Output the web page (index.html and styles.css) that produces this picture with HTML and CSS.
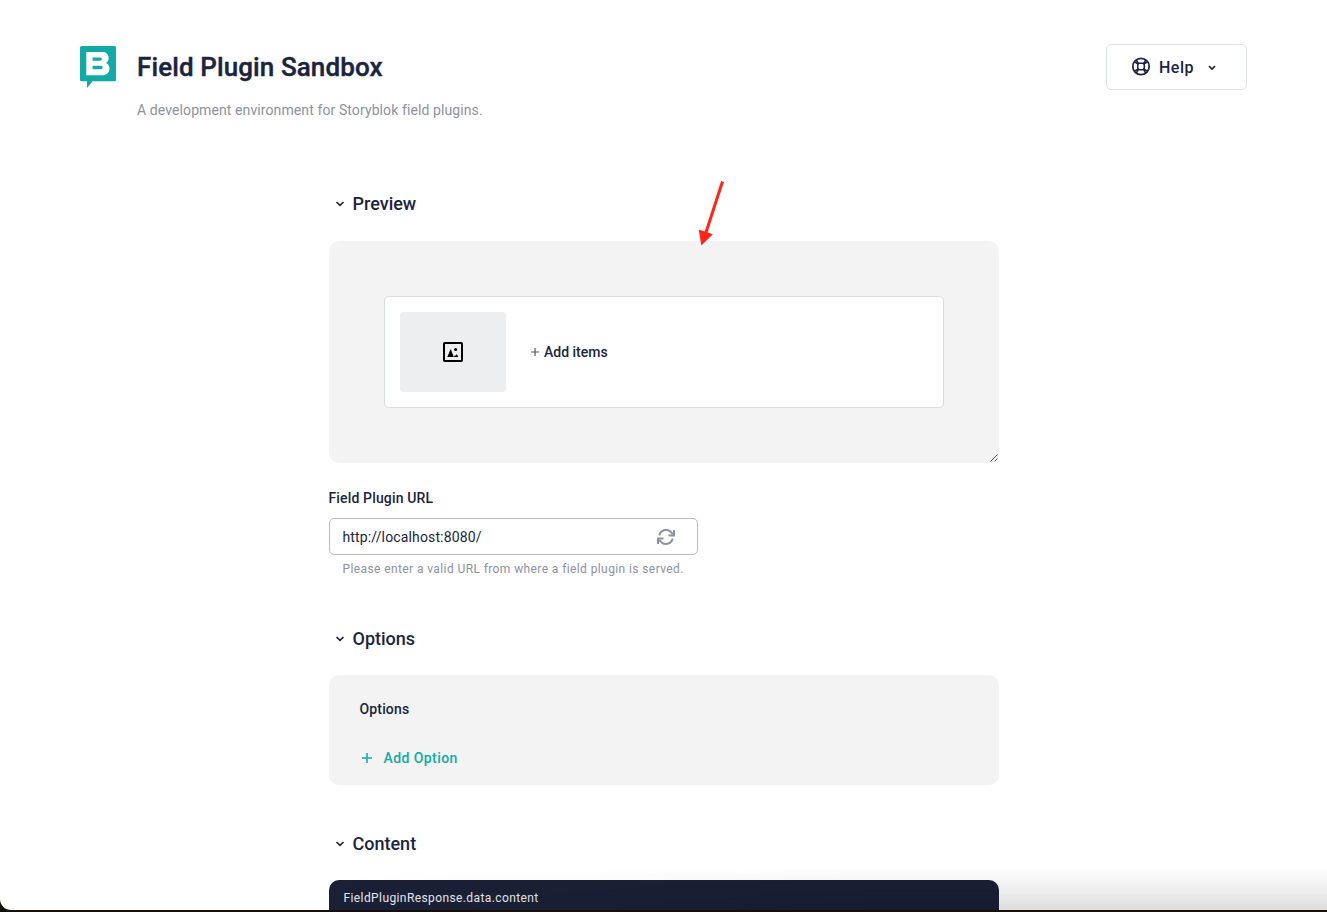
FILE: index.html
```html
<!DOCTYPE html>
<html lang="en">
<head>
<meta charset="utf-8">
<title>Field Plugin Sandbox</title>
<link rel="stylesheet" href="styles.css">
</head>
<body>
<div class="window">
  <header class="header">
    <svg class="logo" width="36" height="42" viewBox="0 0 36 42"><path fill="#11aaa8" d="M1.500 0h33A1.500 1.500 0 0 1 36 1.500v32.300a1.500 1.500 0 0 1-1.500 1.500H12.500L7 42v-6.700H1.500A1.500 1.500 0 0 1 0 33.800V1.500A1.500 1.500 0 0 1 1.500 0z"/><path fill="#fff" fill-rule="evenodd" d="M6.300 6h16.200c3.800 0 6.200 2.500 6.200 6 0 2.400-1 4-2.900 5 2.300.9 3.700 2.800 3.700 5.400 0 4.200-3 6.800-7.300 6.800H6.300zM12.600 11.600v3.200h7.700c2.100 0 2.100-3.200 0-3.200zm0 8.200v3.400h8.400c2.200 0 2.200-3.400 0-3.400z"/></svg>
    <div class="heading">
      <h1 class="title">Field Plugin Sandbox</h1>
      <p class="subtitle">A development environment for Storyblok field plugins.</p>
    </div>
    <button class="help">
      <svg width="20" height="20" viewBox="0 0 20 20" fill="none" stroke="#1b243f"><circle cx="10" cy="9.500" r="8.200" stroke-width="1.700"/><rect x="6.700" y="6.200" width="6.600" height="6.600" rx="2.200" stroke-width="1.500"/><path stroke-width="1.500" d="M5.300 3l2.200 3.700M3.500 4.800L7.200 7M14.700 3l-2.200 3.700M16.500 4.800L12.800 7M5.300 16l2.200-3.700M3.500 14.200L7.200 12M14.700 16l-2.200-3.700M16.500 14.200L12.800 12"/></svg>
      <span class="help-label">Help</span>
      <svg class="help-chevron" width="8" height="6" viewBox="0 0 8 6"><path d="M1 1.200l3 2.800 3-2.800" fill="none" stroke="#1b243f" stroke-width="1.700"/></svg>
    </button>
  </header>
  <main class="main">
    <h2 class="section"><svg width="10" height="6" viewBox="0 0 10 6"><path d="M1.500 1l3.500 3.400L8.500 1" fill="none" stroke="#1b243f" stroke-width="1.700"/></svg><span class="section-name">Preview</span></h2>
    <section class="panel preview">
      <div class="asset">
        <div class="thumb"><svg width="20" height="20" viewBox="0 0 20 20"><rect x="1" y="1" width="18" height="18" rx=".7" fill="none" stroke="#000" stroke-width="2"/><path d="M4.300 15L7.700 7l3.100 8zM11 15l1-2 .8.900.9-2 1.600 3.100z"/><circle cx="12.600" cy="7.500" r="1.500"/></svg></div>
        <svg class="plus-small" width="8" height="8" viewBox="0 0 8 8"><path d="M4 0v8M0 4h8" stroke="#535a70" stroke-width="1.200"/></svg>
        <span class="add-items">Add items</span>
      </div>
      <svg class="grip" width="8" height="8" viewBox="0 0 8 8"><path d="M.5 7.500l7-7M4.500 7.500l3-3" stroke="#555" stroke-width="1"/></svg>
    </section>
    <label class="label">Field Plugin URL</label>
    <div class="field">
      <span>http://localhost:8080/</span>
      <svg width="18" height="16" viewBox="0 0 18 16" fill="none" stroke="#8d919f" stroke-width="2"><path d="M2.200 6.300C3.500 2.700 6 1 9 1c3 0 5.200 1.500 6.700 4.200M15.800 9.700C14.500 13.300 12 15 9 15c-3 0-5.200-1.500-6.700-4.200"/><path d="M17 1v5.500h-5.500M1 15V9.500h5.500"/></svg>
    </div>
    <p class="hint">Please enter a valid URL from where a field plugin is served.</p>
    <h2 class="section options-title"><svg width="10" height="6" viewBox="0 0 10 6"><path d="M1.500 1l3.500 3.400L8.500 1" fill="none" stroke="#1b243f" stroke-width="1.700"/></svg><span class="section-name">Options</span></h2>
    <section class="panel options">
      <div class="options-label">Options</div>
      <div class="add-option"><svg width="10" height="10" viewBox="0 0 10 10"><path d="M5 0v10M0 5h10" stroke="#11aaa8" stroke-width="1.500"/></svg>Add Option</div>
    </section>
    <h2 class="section content-title"><svg width="10" height="6" viewBox="0 0 10 6"><path d="M1.500 1l3.500 3.400L8.500 1" fill="none" stroke="#1b243f" stroke-width="1.700"/></svg><span class="section-name">Content</span></h2>
    <section class="code">FieldPluginResponse.data.content</section>
  </main>
  <svg class="arrow" width="26" height="66" viewBox="0 0 26 66"><path d="M24.500 1.500L7.500 54" stroke="#ff2618" stroke-width="3"/><path d="M.7 49.500l14.200 4.700L3.300 65.500z" fill="#ff2618"/></svg>
  <div class="shade"></div>
</div>
</body>
</html>
```

FILE: styles.css
```css
* { box-sizing: border-box; }
body { margin: 0; height: 912px; overflow: hidden; background: #171009; color: #1b243f; font-family: Roboto, sans-serif; }
h1, h2, p { margin: 0; }
svg { display: block; flex: none; }
.window { position: relative; height: 910px; overflow: hidden; background: #fff; border-bottom-left-radius: 11px; }
.header { display: flex; align-items: flex-start; height: 186px; padding: 44px 80px 0; }
.logo { margin-top: 2px; }
.heading { flex: 1; padding: 7px 0 0 21px; }
.title { font-size: 26px; line-height: 32px; font-weight: 500; letter-spacing: .1px; -webkit-text-stroke: .4px #1b243f; }
.subtitle { margin-top: 17px; font-size: 14px; line-height: 20px; letter-spacing: .1px; color: #8d919f; }
.help { display: flex; align-items: center; width: 141px; height: 46px; padding: 0 0 0 24px; border: 1px solid #dfe3e8; border-radius: 5px; background: #fff; color: inherit; font: 500 16px/20px Roboto, sans-serif; letter-spacing: .5px; }
.help-label { margin: 1px 0 0 8px; }
.help-chevron { margin: 2px 0 0 14px; }
.main { width: 670px; margin-left: 329px; }
.section { display: flex; align-items: center; gap: 7.5px; height: 36px; padding-left: 6px; font-size: 18px; font-weight: 500; }
.section-name { padding-bottom: 2px; }
.panel { background: #f3f3f3; border-radius: 10px; }
.preview { position: relative; height: 222px; margin-top: 19px; padding: 55px; }
.asset { display: flex; align-items: center; height: 112px; padding-left: 15px; border: 1px solid #dadde2; border-radius: 5px; background: #fff; }
.thumb { display: flex; align-items: center; justify-content: center; width: 106px; height: 80px; border-radius: 4px; background: #edeef0; }
.plus-small { margin-left: 25px; }
.add-items { margin-left: 5px; font-size: 14px; font-weight: 500; }
.grip { position: absolute; right: 1px; bottom: 1px; }
.label { display: block; margin: 25px 0 0 -.5px; font-size: 14px; line-height: 20px; font-weight: 500; letter-spacing: .15px; }
.field { display: flex; align-items: center; justify-content: space-between; width: 369px; height: 37px; margin-top: 10px; padding: 0 22px 0 12.5px; border: 1px solid #b9bcc4; border-radius: 5px; font-size: 14px; letter-spacing: .14px; }
.hint { margin: 6px 0 0 13.5px; font-size: 12px; line-height: 16px; letter-spacing: .4px; color: #8d919f; }
.options-title { margin-top: 44px; }
.options { height: 110px; margin-top: 18px; padding: 24px 30.5px; }
.options-label { font-size: 14px; line-height: 20px; font-weight: 500; letter-spacing: .15px; }
.add-option { display: flex; align-items: center; gap: 12px; margin: 29px 0 0 2px; font-size: 14px; line-height: 20px; font-weight: 500; letter-spacing: .42px; color: #11aaa8; }
.content-title { margin-top: 41px; }
.code { height: 60px; margin-top: 18px; padding: 10px 14.5px; border-radius: 10px 10px 0 0; background: #1b2036; color: #e8e9ec; font-size: 12px; line-height: 16px; letter-spacing: .4px; }
.arrow { position: absolute; left: 698px; top: 180px; }
.shade { position: absolute; left: 329px; right: 0; bottom: 0; height: 42px; background: linear-gradient(transparent, rgba(0, 0, 0, .13)); -webkit-mask-image: linear-gradient(90deg, transparent, #000 55%); mask-image: linear-gradient(90deg, transparent, #000 55%); }
```
